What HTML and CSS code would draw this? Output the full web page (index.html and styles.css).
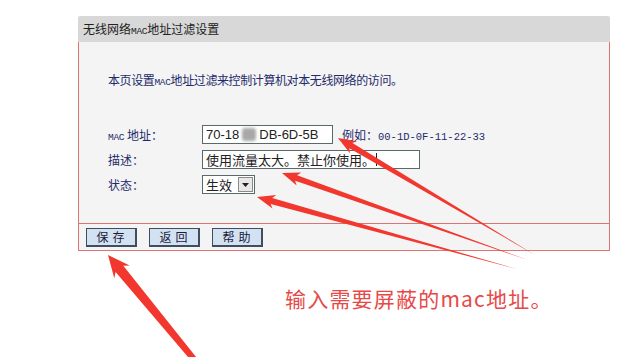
FILE: index.html
```html
<!DOCTYPE html>
<html lang="zh">
<head>
<meta charset="utf-8">
<link rel="stylesheet" href="styles.css">
</head>
<body>
<div class="page">
  <div class="panel">
    <div class="panel-head">无线网络<span class="asc">MAC</span>地址过滤设置</div>
    <div class="panel-body">
      <p class="intro">本页设置<span class="asc">MAC</span>地址过滤来控制计算机对本无线网络的访问。</p>
      <div class="form">
        <div class="row">
          <span class="label"><span class="asc">MAC</span> 地址：</span>
          <span class="input mac">70-18<span class="blur"></span>DB-6D-5B</span>
          <span class="hint">例如：<span class="mono">00-1D-0F-11-22-33</span></span>
        </div>
        <div class="row">
          <span class="label">描述：</span>
          <span class="input desc">使用流量太大。禁止你使用。<span class="caret"></span></span>
        </div>
        <div class="row">
          <span class="label">状态：</span>
          <span class="select"><span class="sel-text">生效</span><span class="sel-btn"><svg width="7" height="4" viewBox="0 0 7 4"><polygon points="0,0 7,0 3.5,4" fill="#222"/></svg></span></span>
        </div>
      </div>
    </div>
    <div class="panel-foot">
      <button class="btn">保存</button>
      <button class="btn">返回</button>
      <button class="btn">帮助</button>
    </div>
  </div>
  <p class="caption">输入需要屏蔽的mac地址。</p>
  <svg class="arrows" width="620" height="357" viewBox="0 0 620 357">
    <g fill="#f2382e">
      <polygon transform="translate(338,138) rotate(30.7)" points="0,0 18,-7 15,-3 229,0 15,3 18,7"/>
      <polygon transform="translate(282,173) rotate(19.5)" points="0,0 18,-7 15,-3 261,0 15,3 18,7"/>
      <polygon transform="translate(257,197) rotate(15.5)" points="0,0 18,-7 15,-3 270,0 15,3 18,7"/>
      <polygon transform="translate(108,255) rotate(50.5)" points="0,0 22,-10 18,-5 320,0 18,5 22,10"/>
    </g>
  </svg>
</div>
</body>
</html>
```
FILE: styles.css
```css
* { box-sizing: border-box; }
html, body { margin: 0; padding: 0; background: #fff; }
body { font-family: "Noto Sans CJK SC", "Noto Sans", sans-serif; font-size: 12px; color: #222; }
.page { position: relative; width: 620px; height: 357px; overflow: hidden; padding-top: 16px; }
.panel { margin-left: 78px; width: 532px; }
.panel-head { height: 26px; line-height: 26px; background: #d8d8d8; padding-left: 5px; font-size: 12px; color: #222; border-radius: 2px 2px 0 0; }
.asc { font-family: "Liberation Mono", monospace; font-size: 9.5px; letter-spacing: -0.3px; }
.panel-body { height: 181px; background: #f4f4f4; border-left: 1px solid #dc7474; border-right: 1px solid #dc7474; padding: 30px 0 0 29px; }
.intro { margin: 0; line-height: 16px; font-size: 12px; letter-spacing: -0.4px; color: #1e2a6a; }
.form { margin-top: 34px; display: flex; flex-direction: column; gap: 6px; }
.row { display: flex; align-items: center; height: 19px; }
.label { width: 94px; color: #1e2a6a; font-size: 12px; }
.input { height: 19px; border: 1px solid #5a6a6a; background: #fff; display: flex; align-items: center; padding-left: 3px; color: #222; }
.mac { width: 131px; font-family: "Liberation Sans", sans-serif; font-size: 13px; }
.blur { display: inline-block; width: 14px; height: 13px; margin: 0 3px; background: #a8a8a8; border-radius: 3px; filter: blur(1.5px); }
.desc { width: 218px; font-size: 13px; }
.caret { display: inline-block; width: 1px; height: 13px; background: #222; margin-left: 1px; }
.hint { margin-left: 9px; color: #1e2a6a; font-size: 12px; }
.mono { font-family: "Liberation Mono", monospace; font-size: 10.5px; }
.select { width: 53px; height: 19px; border: 1px solid #5a6a6a; background: #fff; display: flex; align-items: center; }
.sel-text { flex: 1; padding-left: 3px; font-size: 13px; line-height: 17px; }
.sel-btn { width: 15px; height: 15px; margin-right: 1px; border: 1px solid #8a8a8a; background: #e8e8e8; display: flex; align-items: center; justify-content: center; }
.panel-foot { height: 28px; background: #f4f4f4; border: 1px solid #dc7474; display: flex; align-items: center; gap: 12px; padding-left: 7px; }
.btn { width: 51px; height: 19px; padding: 0 0 0 3px; margin: 0; font-family: "Noto Sans CJK SC", sans-serif; font-size: 12px; letter-spacing: 4px; line-height: 15px; color: #1a1a3a; background: #d3e2f2; border: 1px solid #3e4e5e; border-right-width: 2px; border-bottom-width: 2px; }
.caption { position: absolute; left: 285px; top: 284px; margin: 0; font-size: 21px; line-height: 28px; letter-spacing: 1.2px; color: #e64a48; }
.arrows { position: absolute; left: 0; top: 0; pointer-events: none; }
```
